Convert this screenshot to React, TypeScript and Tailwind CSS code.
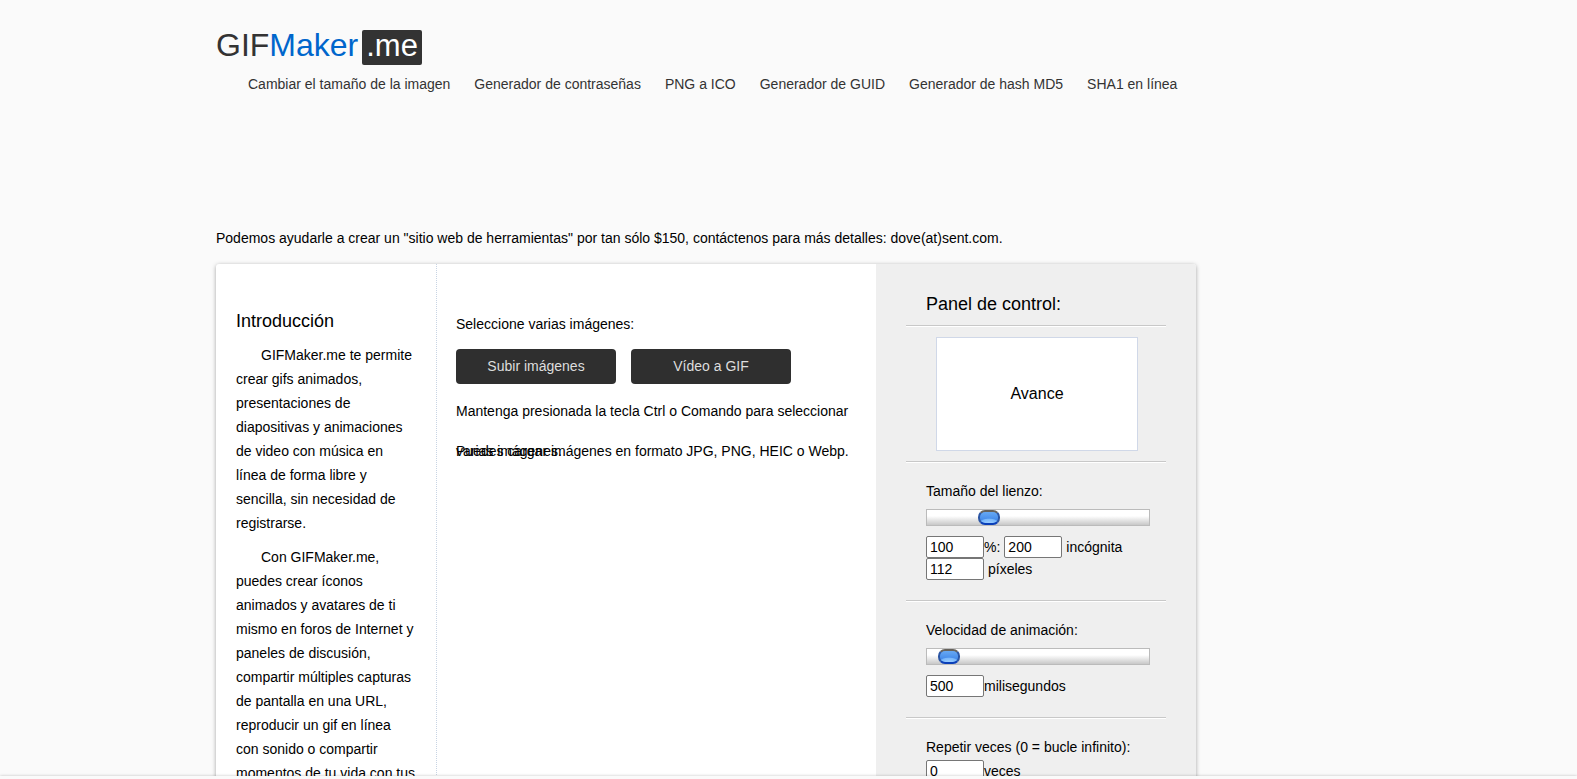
import React, { useState } from "react";

const navLinks = [
  "Cambiar el tamaño de la imagen",
  "Generador de contraseñas",
  "PNG a ICO",
  "Generador de GUID",
  "Generador de hash MD5",
  "SHA1 en línea",
];

const introParagraphs = [
  "GIFMaker.me te permite crear gifs animados, presentaciones de diapositivas y animaciones de video con música en línea de forma libre y sencilla, sin necesidad de registrarse.",
  "Con GIFMaker.me, puedes crear íconos animados y avatares de ti mismo en foros de Internet y paneles de discusión, compartir múltiples capturas de pantalla en una URL, reproducir un gif en línea con sonido o compartir momentos de tu vida con tus amigos.",
];

function Logo() {
  return (
    <a href="#" className="flex items-start text-[32px] leading-[30px]">
      <span className="text-[#333]">GIF</span>
      <span className="text-[#0066cc]">Maker</span>
      <span className="ml-1 h-[35px] rounded-xs bg-[#333] px-1 text-[31px] leading-[31px] text-white">.me</span>
    </a>
  );
}

function Divider() {
  return <hr className="mx-[30px] h-[2px] border-0 border-t border-[#c8c8c8] bg-white" />;
}

interface SliderProps {
  id: string;
  max: number;
  value: number;
  onChange: (value: number) => void;
}

function Slider({ id, max, value, onChange }: SliderProps) {
  return (
    <input
      id={id}
      type="range"
      min={0}
      max={max}
      value={value}
      onChange={(e) => onChange(Number(e.target.value))}
      className="mt-1.5 block h-[17px] w-full appearance-none border border-[#bbb] bg-linear-to-b from-white from-40% to-[#c8c8c8] [&::-webkit-slider-thumb]:h-[15px] [&::-webkit-slider-thumb]:w-[22px] [&::-webkit-slider-thumb]:appearance-none [&::-webkit-slider-thumb]:rounded-[7px] [&::-webkit-slider-thumb]:border-2 [&::-webkit-slider-thumb]:border-t-[#66625c] [&::-webkit-slider-thumb]:border-r-[#2c56a4] [&::-webkit-slider-thumb]:border-b-[#0a3fb8] [&::-webkit-slider-thumb]:border-l-[#2c56a4] [&::-webkit-slider-thumb]:bg-[radial-gradient(ellipse_60%_40%_at_50%_85%,#9accff_0%,#7ab8fb_60%,transparent_75%),linear-gradient(#6fb0f6,#2f78e4)] [&::-webkit-slider-thumb]:bg-origin-border"
    />
  );
}

interface NumberBoxProps {
  label: string;
  value: number;
  onChange: (value: number) => void;
}

function NumberBox({ label, value, onChange }: NumberBoxProps) {
  return (
    <input
      type="text"
      aria-label={label}
      value={value}
      onChange={(e) => onChange(Number(e.target.value) || 0)}
      className="h-[22px] w-[58px] rounded-xs border border-[#767676] bg-white px-[3px] text-sm"
    />
  );
}

function ControlPanel() {
  const [percent, setPercent] = useState(100);
  const [width, setWidth] = useState(200);
  const [height, setHeight] = useState(112);
  const [speed, setSpeed] = useState(500);
  const [repeat, setRepeat] = useState(0);

  return (
    <aside className="w-80 shrink-0 bg-[#efefef] pt-7">
      <h2 className="mb-[9px] px-[50px] text-lg leading-6">Panel de control:</h2>
      <Divider />
      <div className="my-2.5 ml-[60px] flex h-[114px] w-[202px] items-center justify-center border border-[#d0d8e8] bg-white text-base">
        Avance
      </div>
      <Divider />

      <section className="pt-4 pr-[46px] pb-5 pl-[50px]">
        <label htmlFor="canvas-size" className="block leading-6">Tamaño del lienzo:</label>
        <Slider id="canvas-size" max={390} value={percent} onChange={setPercent} />
        <div className="mt-2.5 flex items-center">
          <NumberBox label="Porcentaje" value={percent} onChange={setPercent} />
          <span>%:</span>
          <span className="mx-1 flex">
            <NumberBox label="Ancho" value={width} onChange={setWidth} />
          </span>
          <span>incógnita</span>
        </div>
        <div className="flex items-center gap-1">
          <NumberBox label="Alto" value={height} onChange={setHeight} />
          <span>píxeles</span>
        </div>
      </section>
      <Divider />

      <section className="pt-4 pr-[46px] pb-5 pl-[50px]">
        <label htmlFor="speed" className="block leading-6">Velocidad de animación:</label>
        <Slider id="speed" max={9000} value={speed} onChange={setSpeed} />
        <div className="mt-2.5 flex items-center">
          <NumberBox label="Milisegundos" value={speed} onChange={setSpeed} />
          <span>milisegundos</span>
        </div>
      </section>
      <Divider />

      <section className="pt-4 pr-[46px] pb-5 pl-[50px]">
        <p className="leading-6">Repetir veces (0 = bucle infinito):</p>
        <div className="mt-px flex items-center">
          <NumberBox label="Repetir veces" value={repeat} onChange={setRepeat} />
          <span>veces</span>
        </div>
      </section>
    </aside>
  );
}

export default function App() {
  return (
    <div className="flex h-screen flex-col bg-[#fafafa] font-['Liberation_Sans',Arial,sans-serif] text-sm text-black">
      <div className="min-h-0 flex-1 overflow-hidden">
        <div className="mx-auto max-w-[1145px]">
          <div className="max-w-[980px]">
            <header className="pt-[30px]">
              <Logo />
              <nav className="mt-[7px] flex gap-6 pl-8">
                {navLinks.map((link) => (
                  <a key={link} href="#" className="leading-6 whitespace-nowrap text-[#333] hover:underline">
                    {link}
                  </a>
                ))}
              </nav>
            </header>

            <p className="mt-[130px] leading-6">
              Podemos ayudarle a crear un "sitio web de herramientas" por tan sólo $150, contáctenos para más detalles: dove(at)sent.com.
            </p>

            <main className="mt-[14px] flex overflow-hidden rounded-[3px] bg-white shadow-[0_1px_4px_rgba(0,0,0,0.35)]">
              <article className="w-[221px] shrink-0 border-r border-dotted border-[#c8d4e4] px-5 pt-[45px] pb-5">
                <h1 className="text-lg leading-6">Introducción</h1>
                {introParagraphs.map((text) => (
                  <p key={text} className="mt-2.5 indent-[25px] leading-6">
                    {text}
                  </p>
                ))}
              </article>

              <section className="min-w-0 flex-1 px-[19px] pt-10">
                <p className="h-10 leading-10">Seleccione varias imágenes:</p>
                <div className="mt-[5px] mb-[7px] flex gap-[15px]">
                  <button type="button" className="h-[35px] w-40 cursor-pointer rounded bg-[#2f2f2f] pb-0.5 text-[#ddd]">
                    Subir imágenes
                  </button>
                  <button type="button" className="h-[35px] w-40 cursor-pointer rounded bg-[#2f2f2f] pb-0.5 text-[#ddd]">
                    Vídeo a GIF
                  </button>
                </div>
                {/* each hint keeps a single row's height */}
                <p className="h-10 leading-10">
                  Mantenga presionada la tecla Ctrl o Comando para seleccionar varias imágenes.
                </p>
                <p className="h-10 leading-10">Puedes cargar imágenes en formato JPG, PNG, HEIC o Webp.</p>
              </section>

              <ControlPanel />
            </main>
          </div>
        </div>
      </div>
      <footer className="relative h-[3px] shrink-0 bg-[#fafafa] shadow-[0_0_3px_rgba(0,0,0,0.25)]" />
    </div>
  );
}
